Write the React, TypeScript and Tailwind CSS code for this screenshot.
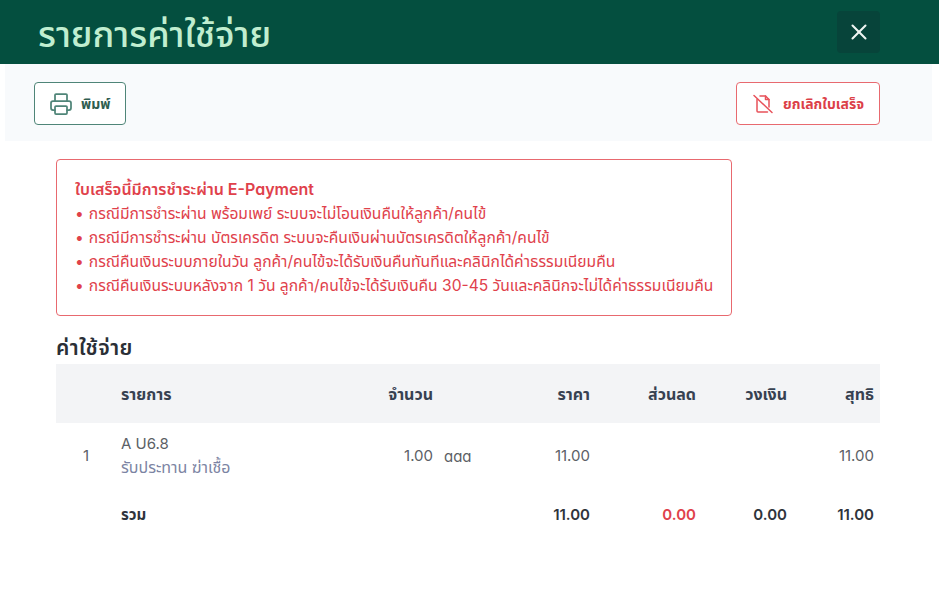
import type { ReactNode } from "react";
import { Printer, X } from "lucide-react";

const FONT = "font-['Inter','Noto_Sans','Noto_Sans_Thai','Noto_Sans_CJK_SC',sans-serif] [font-feature-settings:'cv11']";

const notes = [
  "กรณีมีการชำระผ่าน พร้อมเพย์ ระบบจะไม่โอนเงินคืนให้ลูกค้า/คนไข้",
  "กรณีมีการชำระผ่าน บัตรเครดิต ระบบจะคืนเงินผ่านบัตรเครดิตให้ลูกค้า/คนไข้",
  "กรณีคืนเงินระบบภายในวัน ลูกค้า/คนไข้จะได้รับเงินคืนทันทีและคลินิกได้ค่าธรรมเนียมคืน",
  "กรณีคืนเงินระบบหลังจาก 1 วัน ลูกค้า/คนไข้จะได้รับเงินคืน 30-45 วันและคลินิกจะไม่ได้ค่าธรรมเนียมคืน",
];

function ReceiptOff() {
  return (
    <svg width="22" height="22" viewBox="0 0 22 22" fill="none" stroke="#e8525a" strokeWidth="1.5" strokeLinecap="round" strokeLinejoin="round">
      <path d="M2 2.5 20 19.5" />
      <path d="M8 3h5.5L17 6.5V14" />
      <path d="M13.5 3v3.5H17" />
      <path d="M5 6.5V18a1 1 0 0 0 1 1h9.5" />
    </svg>
  );
}

function Row({ cells, className }: { cells: ReactNode[]; className: string }) {
  return (
    <div className={"grid grid-cols-[65px_200px_112px_157px_106px_91px_87px] pr-1.5 " + className}>
      {cells.map((c, i) => (
        <div key={i} className={i > 1 ? "text-right" : ""}>
          {c}
        </div>
      ))}
    </div>
  );
}

export default function App() {
  return (
    <div className={"h-[602px] w-[944px] overflow-hidden bg-white " + FONT}>
      <header className="flex h-16 w-[939px] items-center justify-between bg-[#044f3f] pl-[38px] pr-[59px]">
        <h1 className="pt-1 text-[36px] font-medium leading-none text-[#c0eed0]">รายการค่าใช้จ่าย</h1>
        <button className="flex h-[42px] w-[43px] items-center justify-center rounded bg-[#07443a] text-[#eef5f2]">
          <X size={26} strokeWidth={1.9} />
        </button>
      </header>

      <div className="ml-[5px] flex h-[77px] w-[927px] items-center justify-between bg-[#f8fafc] pl-[29px] pr-[52px] pt-[2px]">
        <button className="flex h-[43px] w-[92px] items-center gap-2 rounded border-[1.5px] border-[#4f8578] bg-white pl-3.5">
          <Printer size={24} strokeWidth={1.75} className="text-[#4f8578]" />
          <span className="text-sm font-bold text-[#2f5d50]">พิมพ์</span>
        </button>
        <button className="flex h-[43px] w-[144px] items-center gap-[9px] rounded border-[1.5px] border-[#e8696f] bg-white pl-[15px]">
          <ReceiptOff />
          <span className="text-sm font-bold text-[#dc3f48]">ยกเลิกใบเสร็จ</span>
        </button>
      </div>

      <div className="ml-14 mt-[18px] h-[157px] w-[676px] rounded border-[1.5px] border-[#e8696f] pl-[18px] pt-[17px] text-[#e0414b]">
        <p className="mb-px text-base font-semibold leading-6">ใบเสร็จนี้มีการชำระผ่าน E-Payment</p>
        <ul>
          {notes.map((n) => (
            <li key={n} className="flex gap-[5px] whitespace-nowrap text-[15.6px] leading-6">
              <span>•</span>
              <span>{n}</span>
            </li>
          ))}
        </ul>
      </div>

      <div className="ml-14 w-[824px]">
        <h2 className="mt-[19px] text-[21px] font-semibold leading-[26px] tracking-[0.4px] text-[#2b2f36]">ค่าใช้จ่าย</h2>
        <Row
          className="mt-[3px] h-[59px] items-center bg-[#f3f4f6] text-base font-bold text-[#374151]"
          cells={["", "รายการ", "จำนวน", "ราคา", "ส่วนลด", "วงเงิน", "สุทธิ"]}
        />
        <Row
          className="h-[66px] items-center text-[15px] text-[#5c5f66]"
          cells={[
            <span className="pl-[27px]">1</span>,
            <div className="mb-[3px] whitespace-nowrap">
              <div className="leading-6">A U6.8</div>
              <div className="text-base leading-[22px] text-[#7c84a3]">รับประทาน ฆ่าเชื้อ</div>
            </div>,
            <span className="relative">
              1.00
              <span className="absolute left-[calc(100%+11px)] top-0 whitespace-nowrap">aaa</span>
            </span>,
            "11.00",
            "",
            "",
            "11.00",
          ]}
        />
        <Row
          className="h-[50px] items-center pt-[2px] text-[15px] font-semibold text-[#2f343c]"
          cells={[
            "",
            <span className="font-bold">รวม</span>,
            "",
            "11.00",
            <span className="text-[#e0414b]">0.00</span>,
            "0.00",
            "11.00",
          ]}
        />
      </div>
    </div>
  );
}
